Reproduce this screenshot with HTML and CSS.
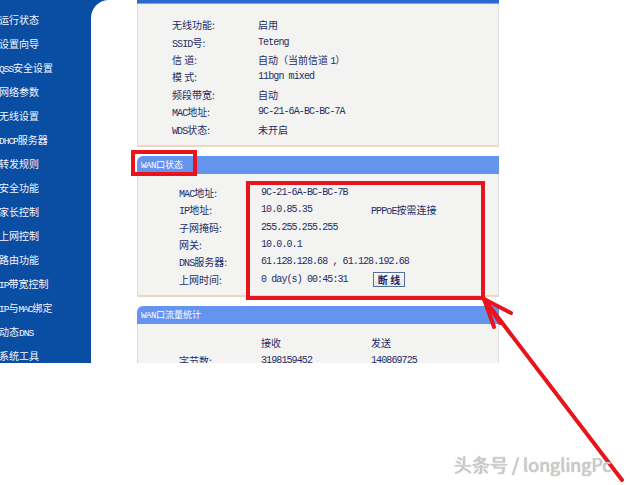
FILE: index.html
```html
<!DOCTYPE html>
<html lang="zh-CN">
<head>
    <meta charset="UTF-8">
    <title>运行状态</title>
    <link rel="stylesheet" href="styles.css">
</head>
<body>
<div class="page">

    <div class="main">
        <!-- left menu -->
        <ul class="menu">
            <li>运行状态</li>
            <li>设置向导</li>
            <li><span class="en">QSS</span>安全设置</li>
            <li>网络参数</li>
            <li>无线设置</li>
            <li><span class="en">DHCP</span>服务器</li>
            <li>转发规则</li>
            <li>安全功能</li>
            <li>家长控制</li>
            <li>上网控制</li>
            <li>路由功能</li>
            <li><span class="en">IP</span>带宽控制</li>
            <li><span class="en">IP</span>与<span class="en">MAC</span>绑定</li>
            <li>动态<span class="en">DNS</span></li>
            <li>系统工具</li>
        </ul>

        <div class="content">
            <!-- wireless (header scrolled away) -->
            <div class="panel">
                <div class="panel-top"></div>
                <div class="panel-body rows wide">
                    <span>无线功能:</span><span>启用</span><span></span>
                    <span><span class="en">SSID</span>号:</span><span class="en">Teteng</span><span></span>
                    <span>信 道:</span><span>自动（当前信道 <span class="en">1</span>）</span><span></span>
                    <span>模 式:</span><span class="en">11bgn mixed</span><span></span>
                    <span>频段带宽:</span><span>自动</span><span></span>
                    <span><span class="en">MAC</span>地址:</span><span class="en">9C-21-6A-BC-BC-7A</span><span></span>
                    <span><span class="en">WDS</span>状态:</span><span>未开启</span><span></span>
                </div>
            </div>

            <div class="panel gap">
                <div class="panel-head"><span class="en">WAN</span>口状态</div>
                <div class="panel-body rows">
                    <span><span class="en">MAC</span>地址:</span><span class="en">9C-21-6A-BC-BC-7B</span><span></span>
                    <span><span class="en">IP</span>地址:</span><span class="en">10.0.85.35</span><span><span class="en">PPPoE</span>按需连接</span>
                    <span>子网掩码:</span><span class="en">255.255.255.255</span><span></span>
                    <span>网关:</span><span class="en">10.0.0.1</span><span></span>
                    <span><span class="en">DNS</span>服务器:</span><span class="en span2">61.128.128.68 , 61.128.192.68</span>
                    <span>上网时间:</span><span class="en">0 day(s) 00:45:31</span><span><button class="btn">断 线</button></span>
                </div>
            </div>

            <div class="panel gap">
                <div class="panel-head"><span class="en">WAN</span>口流量统计</div>
                <div class="panel-body rows">
                    <span></span><span>接收</span><span>发送</span>
                    <span>字节数:</span><span class="en">3198159452</span><span class="en">140869725</span>
                </div>
            </div>
        </div>
    </div>

    <!-- annotations drawn over the screenshot -->
    <div class="mark mark-title"></div>
    <div class="mark mark-info"></div>
    <svg class="arrow" width="630" height="485" viewBox="0 0 630 485">
        <g stroke="#e8141c" stroke-width="4" stroke-linecap="round" fill="none">
            <path d="M622 480 L484 299"/>
            <path d="M484 299 L511 313"/>
            <path d="M484 299 L494 327"/>
            <path d="M488 304 L500 323"/>
        </g>
    </svg>

    <div class="watermark">头条号 / longlingPc</div>
</div>
</body>
</html>
```

FILE: styles.css
```css
/* General */
* { margin: 0; padding: 0; box-sizing: border-box; }
body { background: #fff; font-family: "Noto Sans CJK SC", sans-serif; }
.page { position: relative; width: 630px; height: 485px; overflow: hidden; background: #fff; }

.en { font-family: "Liberation Mono", monospace; letter-spacing: -0.9px; }

/* Screen area */
.main { display: flex; height: 363px; overflow: hidden; background: #0a4ea4; }

/* Menu */
.menu { width: 92px; list-style: none; padding-top: 8px; margin-left: -1px; color: #f2f6ff;
    font-size: 10px; }
.menu li { height: 24px; line-height: 24px; white-space: nowrap; }
.menu .en { font-size: 9.5px; letter-spacing: -1px; }

/* Content */
.content { flex: 1; background: #fff; border-top-left-radius: 18px; padding-left: 46px; }
.panel { width: 362px; }
.panel.gap { margin-top: 9px; }
.panel-top { height: 4px; background: #2c68d0; border-bottom: 1px solid #7aa2e6; }
.panel-head { height: 18px; line-height: 18px; padding-left: 4px; background: #6594ee;
    border-top-left-radius: 6px; color: #fff; font-size: 9px; }
.panel-head .en { font-size: 9px; letter-spacing: -0.4px; }

.panel-body { background: #f3f3f1; border-left: 1px solid #ead8c0; border-right: 1px solid #e2e2e2;
    border-bottom: 2px solid #ecd8bf; padding: 10px 0 7px 41px; color: #1f2d66; font-size: 10px; }
.rows { display: grid; grid-template-columns: 82px 110px 1fr; grid-auto-rows: 17.4px; align-items: center; }
.rows.wide { grid-template-columns: 86px 110px 1fr; padding-left: 34px; padding-top: 12px; }
.rows > span { white-space: nowrap; }
.span2 { grid-column: span 2; }

.btn { width: 32px; height: 15px; font-family: "Noto Sans CJK SC", sans-serif; font-size: 10px;
    font-weight: bold; line-height: 12px; color: #1c2a5a; background: linear-gradient(#fafafa, #e4e6ee);
    border: 1px solid #55719e; margin-left: 2px; }

/* Red annotations */
.mark { position: absolute; border: 4px solid #e8141c; }
.mark-title { left: 131px; top: 150px; width: 66px; height: 26px; }
.mark-info { left: 246px; top: 181px; width: 239px; height: 119px; }
.arrow { position: absolute; left: 0; top: 0; }

.watermark { position: absolute; left: 454px; top: 451px; font-size: 18px; color: #cfcfcf;
    text-shadow: 0 0 1px #8a8a8a; white-space: nowrap; }
```
